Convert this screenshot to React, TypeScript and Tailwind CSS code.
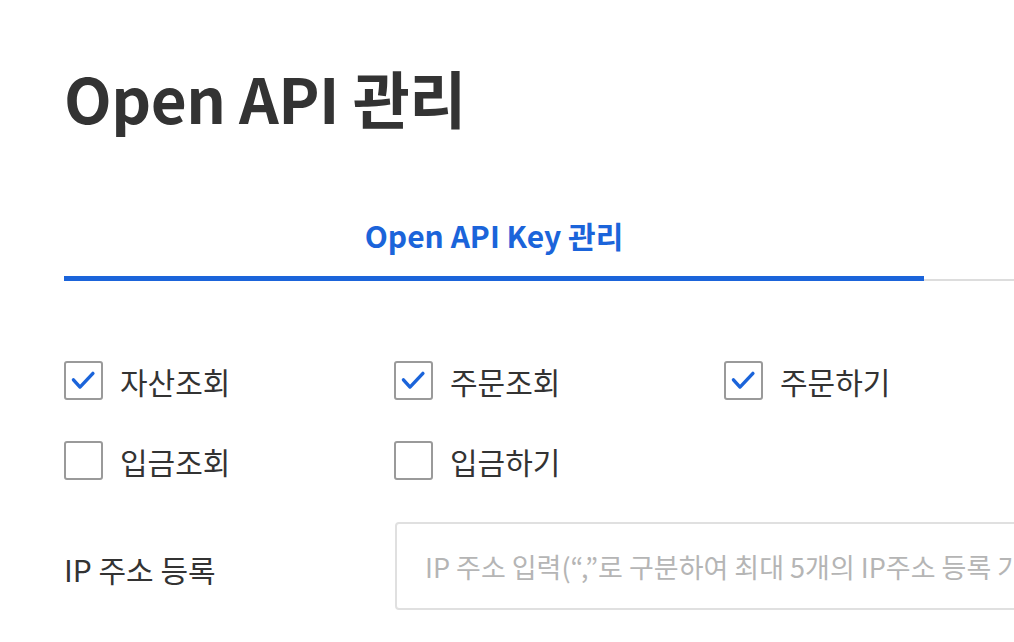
import { useState } from "react";

const font = { fontFamily: '"Noto Sans CJK KR", "Noto Sans", sans-serif' };

function CheckItem({ label, defaultChecked }: { label: string; defaultChecked?: boolean }) {
  const [checked, setChecked] = useState(!!defaultChecked);
  return (
    <label className="flex items-center gap-[17px] cursor-pointer select-none">
      <span
        onClick={() => setChecked(!checked)}
        className="flex h-[39px] w-[39px] shrink-0 items-center justify-center rounded-[3px] border-2 border-[#9a9a9a] bg-white"
      >
        {checked && (
          <svg width="39" height="39" viewBox="0 0 39 39" fill="none">
            <path
              d="M8.3 18.8L15.6 26.8L30 11.6"
              stroke="#1b64da"
              strokeWidth="3.8"
              strokeLinecap="round"
              strokeLinejoin="round"
            />
          </svg>
        )}
      </span>
      <span className="text-[30px] leading-none text-[#333]">{label}</span>
    </label>
  );
}

export default function App() {
  return (
    <div className="h-[642px] w-[1014px] overflow-hidden bg-white" style={font}>
      <div className="w-[1800px] pl-[64px] pt-[58px]">
        <h1 className="text-[62px] font-bold leading-[78px] tracking-[-0.5px] text-[#333]">
          Open API 관리
        </h1>

        {/* tabs */}
        <div className="mt-[79px] flex border-b-2 border-[#dddddd]">
          <button className="-mb-[2px] w-[860px] border-b-[5px] border-[#1b64da] pb-[21px] text-[30px] font-bold leading-[40px] text-[#1b64da]">
            Open API Key 관리
          </button>
        </div>

        {/* permissions */}
        <div className="mt-[80px] grid w-[990px] grid-cols-[330px_330px_330px] gap-y-[41px]">
          <CheckItem label="자산조회" defaultChecked />
          <CheckItem label="주문조회" defaultChecked />
          <CheckItem label="주문하기" defaultChecked />
          <CheckItem label="입금조회" />
          <CheckItem label="입금하기" />
        </div>

        {/* ip */}
        <div className="mt-[42px] flex items-center">
          <div className="w-[331px] pt-[6px] text-[30px] text-[#333]">IP 주소 등록</div>
          <input
            type="text"
            className="h-[88px] w-[900px] rounded-[4px] border-2 border-[#e0e0e0] px-[28px] text-[27px] text-[#333] outline-none placeholder:text-[#b5b5b5]"
            placeholder="IP 주소 입력(“,”로 구분하여 최대 5개의 IP주소 등록 가능)"
          />
        </div>
      </div>
    </div>
  );
}
